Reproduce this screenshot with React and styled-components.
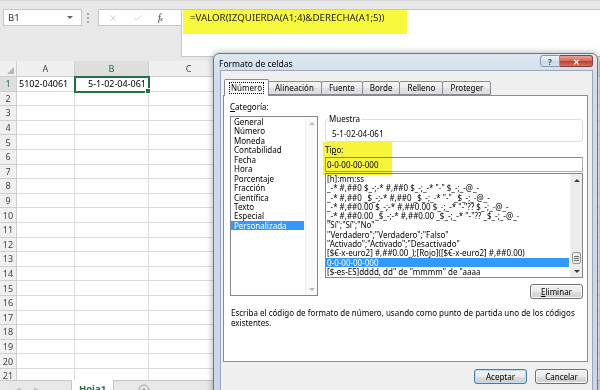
import React from 'react';
import styled, { createGlobalStyle } from 'styled-components';
import { X, Check, CirclePlus } from 'lucide-react';

const GREEN = '#217346';
const UI_FONT = '"Noto Sans", "Open Sans", sans-serif';

const GlobalStyle = createGlobalStyle`
  html, body { margin: 0; padding: 0; }
  body {
    width: 600px;
    height: 390px;
    overflow: hidden;
    background: #fff;
    font-family: ${UI_FONT};
  }
`;

const Screen = styled.div`
  position: relative;
  width: 600px;
  height: 390px;
  overflow: hidden;
  display: flex;
  flex-direction: column;
  background: #fff;
`;

/* ---------- formula bar ---------- */

const FormulaArea = styled.div`
  flex: none;
  height: 61px;
  box-sizing: border-box;
  background: #e8e8e8;
  border-top: 1px solid #d6d6d6;
  display: flex;
  align-items: flex-start;
  padding: 8px 0 0 3px;
`;

const NameBox = styled.div`
  width: 79px;
  height: 17px;
  box-sizing: border-box;
  background: #fff;
  border: 1px solid #c6c6c6;
  display: flex;
  align-items: center;
  justify-content: space-between;
  padding: 0 8px 0 4px;
  font-size: 9.5px;
  color: #333;
`;

const DropArrow = styled.span`
  width: 0;
  height: 0;
  border-left: 3px solid transparent;
  border-right: 3px solid transparent;
  border-top: 3px solid #666;
`;

const Grip = styled.div`
  width: 2px;
  height: 10px;
  margin: 4px 9px 0 5px;
  background: repeating-linear-gradient(#a9a9a9 0 2px, transparent 2px 4px);
`;

const FxButtons = styled.div`
  width: 83px;
  height: 17px;
  box-sizing: border-box;
  background: #fff;
  border: 1px solid #c6c6c6;
  border-right: none;
  display: flex;
  align-items: center;
  gap: 15px;
  padding-left: 9px;
  color: #b4b4b4;
`;

const Fx = styled.span`
  width: 10px;
  font-family: "Liberation Serif", serif;
  font-style: italic;
  font-size: 10px;
  color: #444;
  letter-spacing: -1px;

  small {
    font-size: 7px;
  }
`;

const FormulaBox = styled.div`
  flex: 1;
  height: 48px;
  box-sizing: border-box;
  background: #fff;
  border: 1px solid #c6c6c6;
  border-right: none;
  padding-left: 1px;
`;

const Marker = styled.div`
  width: 224px;
  height: 24px;
  box-sizing: border-box;
  background: #f8f83c;
  padding: 2px 0 0 7px;
  font-size: 9.7px;
  line-height: 12px;
  color: #222;
`;

/* ---------- sheet ---------- */

const Sheet = styled.div`
  flex: none;
  height: 319px;
  overflow: hidden;
  display: grid;
  grid-template-columns: 17px 58px 74px 80px 1fr;
  grid-template-rows: 16px;
  grid-auto-rows: 14.6px;
  font-size: 9px;
`;

const HeadCell = styled.div`
  box-sizing: border-box;
  background: ${({ $active }) => ($active ? '#dedede' : '#f0f0f0')};
  color: ${({ $active }) => ($active ? GREEN : '#444')};
  border-right: 1px solid #cfcfcf;
  border-bottom: 1px solid #cfcfcf;
  display: flex;
  align-items: center;
  justify-content: center;
  line-height: 1;
`;

const Corner = styled(HeadCell)`
  align-items: flex-end;
  justify-content: flex-end;
  padding: 0 2px 2px 0;
`;

const Cell = styled.div`
  position: relative;
  box-sizing: border-box;
  border-right: 1px solid #dadcdd;
  border-bottom: 1px solid #dadcdd;
  padding: 0 2px;
  display: flex;
  align-items: center;
  justify-content: ${({ $right }) => ($right ? 'flex-end' : 'flex-start')};
  white-space: nowrap;
  color: #000;
  outline: ${({ $selected }) => ($selected ? `2px solid ${GREEN}` : 'none')};
  outline-offset: -1px;
  z-index: ${({ $selected }) => ($selected ? 1 : 0)};

  &::after {
    content: '';
    display: ${({ $selected }) => ($selected ? 'block' : 'none')};
    position: absolute;
    right: -3px;
    bottom: -3px;
    width: 4px;
    height: 4px;
    background: ${GREEN};
    border: 1px solid #fff;
  }
`;

const TabBar = styled.div`
  flex: none;
  height: 16px;
  background: #e8e8e8;
  border-top: 1px solid #c8c8c8;
  display: flex;
  align-items: stretch;
`;

const NavArrows = styled.div`
  width: 72px;
  display: flex;
  align-items: center;
  gap: 14px;
  padding-left: 15px;
  box-sizing: border-box;
  border-right: 1px solid #c6c6c6;
  color: #bdbdbd;
  font-size: 7px;
`;

const SheetTab = styled.div`
  width: 41px;
  margin-top: -1px;
  background: #fff;
  border-right: 1px solid #c6c6c6;
  display: flex;
  justify-content: center;
  padding-top: 2px;
  font-size: 9.5px;
  font-weight: 700;
  color: ${GREEN};
`;

const AddSheet = styled.div`
  display: flex;
  align-items: flex-start;
  padding: 3px 0 0 24px;
  color: #7a7a7a;
`;

/* ---------- dialog ---------- */

const Dialog = styled.div`
  position: absolute;
  left: 213px;
  top: 53px;
  width: 385px;
  height: 345px;
  box-sizing: border-box;
  border: 1px solid #6b7889;
  border-radius: 6px 6px 0 0;
  background: linear-gradient(180deg, #dde7f2 0%, #cedbea 30px, #c9d7e8 100%);
  box-shadow: 0 0 7px rgba(0, 0, 0, 0.35);
  display: flex;
  flex-direction: column;
  padding: 0 4px 0 6px;
  font-family: ${UI_FONT};
  font-size: 8px;
  color: #000;
`;

const TitleBar = styled.div`
  height: 16px;
  display: flex;
  justify-content: space-between;
  align-items: flex-start;
`;

const Title = styled.div`
  padding: 5px 0 0 0;
  margin-left: -1px;
  font-size: 8.5px;
  line-height: 10px;
`;

const Controls = styled.div`
  display: flex;
  margin-top: 1px;
`;

const CtrlButton = styled.div`
  height: 12px;
  width: ${({ $close }) => ($close ? '33px' : '20px')};
  box-sizing: border-box;
  border: 1px solid ${({ $close }) => ($close ? '#8d3b34' : '#8596ab')};
  border-left-width: ${({ $close }) => ($close ? 0 : 1)}px;
  border-radius: ${({ $close }) => ($close ? '0 3px 3px 0' : '3px 0 0 3px')};
  background: ${({ $close }) =>
    $close
      ? 'linear-gradient(#e8a293, #d66e5f 45%, #c2402f 55%, #d0735e)'
      : 'linear-gradient(#eef3f9, #dbe5f0 45%, #cbd8e8 55%, #d9e4f1)'};
  color: ${({ $close }) => ($close ? '#fff' : '#3c4a5c')};
  display: flex;
  align-items: center;
  justify-content: center;
  font-size: 8px;
  font-weight: 700;
`;

const Client = styled.div`
  flex: 1;
  background: #f0f0f0;
  border: 1px solid #9aa6b5;
  padding: 8px 4px 0 2px;
  display: flex;
  flex-direction: column;
`;

const Tabs = styled.div`
  display: flex;
  align-items: flex-end;
  height: 16px;
  padding-left: 2px;
`;

const Tab = styled.div`
  position: relative;
  box-sizing: border-box;
  height: ${({ $active }) => ($active ? '17px' : '14px')};
  margin: ${({ $active }) => ($active ? '0 -2px -1px -1px' : '0 -1px 0 0')};
  padding: 0 ${({ $active }) => ($active ? '4px' : '5px')};
  border: 1px solid #898c95;
  border-bottom: ${({ $active }) => ($active ? 'none' : '1px solid #898c95')};
  border-radius: 2px 2px 0 0;
  background: ${({ $active }) =>
    $active ? '#fff' : 'linear-gradient(#f4f4f4, #ececec 50%, #e2e2e2 51%, #dcdcdc)'};
  z-index: ${({ $active }) => ($active ? 2 : 1)};
  display: flex;
  align-items: center;
  line-height: 10px;

  span {
    padding: 0 1px;
    border: 1px dotted ${({ $active }) => ($active ? '#000' : 'transparent')};
  }
`;

const Panel = styled.div`
  position: relative;
  height: 267px;
  box-sizing: border-box;
  background: #fff;
  border: 1px solid #898c95;
  padding: 6px 4px 0 6px;
  display: flex;
  flex-direction: column;
`;

const TopRow = styled.div`
  display: flex;
  gap: 7px;
`;

const LeftCol = styled.div`
  width: 88px;
  display: flex;
  flex-direction: column;
`;

const RightCol = styled.div`
  flex: 1;
  display: flex;
  flex-direction: column;
`;

const Label = styled.div`
  line-height: 10px;
  margin-top: ${({ $top = 0 }) => $top}px;
  margin-bottom: ${({ $gap }) => $gap}px;

  u {
    text-decoration-thickness: 1px;
    text-underline-offset: 1px;
  }
`;

const ListBox = styled.div`
  height: ${({ $h }) => $h}px;
  box-sizing: border-box;
  border: 1px solid #828790;
  background: #fff;
  display: flex;
  overflow: hidden;
`;

const Items = styled.div`
  flex: 1;
  display: flex;
  flex-direction: column;
  padding: 0 1px 0 0;
  min-width: 0;
  overflow: hidden;
`;

const Item = styled.div`
  flex: none;
  height: ${({ $h }) => $h}px;
  line-height: ${({ $h }) => $h}px;
  padding-left: ${({ $pad }) => $pad}px;
  white-space: nowrap;
  background: ${({ $selected }) => ($selected ? '#3399ff' : 'transparent')};
  color: ${({ $selected }) => ($selected ? '#fff' : '#000')};
`;

const ScrollBar = styled.div`
  width: 12px;
  flex: none;
  display: flex;
  flex-direction: column;
  justify-content: space-between;
  background: ${({ $track }) => $track};
  border-left: 1px solid #efefef;
  box-sizing: border-box;
`;

const ScrollArrow = styled.div`
  height: 12px;
  display: flex;
  align-items: center;
  justify-content: center;

  &::before {
    content: '';
    width: 0;
    height: 0;
    border-left: 3px solid transparent;
    border-right: 3px solid transparent;
    ${({ $down, $color }) =>
      $down ? `border-top: 3px solid ${$color};` : `border-bottom: 3px solid ${$color};`}
  }
`;

const ScrollTrack = styled.div`
  flex: 1;
  display: flex;
  flex-direction: column;
  justify-content: flex-end;
  padding: 0 1px 1px;
`;

const Thumb = styled.div`
  height: 12px;
  box-sizing: border-box;
  border: 1px solid #979797;
  border-radius: 2px;
  background: linear-gradient(90deg, #f3f3f3, #e4e4e4);
  display: flex;
  flex-direction: column;
  justify-content: center;
  align-items: center;
  gap: 1px;

  i {
    display: block;
    width: 5px;
    height: 1px;
    background: #6f6f6f;
  }
`;

const GroupBox = styled.fieldset`
  margin: 12px 0 0;
  padding: 0 0 2px 6px;
  border: 1px solid #d5dfe5;
  border-radius: 3px;
  min-width: 0;

  legend {
    padding: 0 1px;
    margin-left: -4px;
    line-height: 10px;
  }
`;

const Sample = styled.div`
  line-height: 10px;
  padding-top: 5px;
`;

const TextInput = styled.div`
  height: 15px;
  box-sizing: border-box;
  border: 1px solid #abadb3;
  border-top-color: #8e8f8f;
  padding-left: 1px;
  display: flex;
  align-items: center;
  margin-bottom: 1px;
`;

const Button = styled.button`
  width: 53px;
  height: 15px;
  box-sizing: border-box;
  padding: 0;
  font-family: ${UI_FONT};
  font-size: 8px;
  color: #000;
  border: 1px solid ${({ $default }) => ($default ? '#3c7fb1' : '#707070')};
  border-radius: 3px;
  background: linear-gradient(#f2f2f2 0%, #ebebeb 50%, #dddddd 51%, #cfcfcf 100%);
  box-shadow: inset 0 0 0 1px ${({ $default }) => ($default ? '#bfe0f5' : '#fbfbfb')};
`;

const DeleteButton = styled(Button)`
  align-self: flex-end;
  margin-top: 6px;
`;

const Description = styled.p`
  margin: 9px 0 0 1px;
  line-height: 10px;
`;

const Highlight = styled.div`
  position: absolute;
  left: 99px;
  top: 46px;
  width: 69px;
  height: 33px;
  background: #f6f53c;
  mix-blend-mode: multiply;
  pointer-events: none;
`;

const ButtonRow = styled.div`
  display: flex;
  justify-content: flex-end;
  gap: 8px;
  margin-top: 7px;
`;

const COLS = ['A', 'B', 'C', 'D'];
const ROWS = Array.from({ length: 21 }, (_, i) => i + 1);

const TABS = ['Número', 'Alineación', 'Fuente', 'Borde', 'Relleno', 'Proteger'];

const CATEGORIES = [
  'General', 'Número', 'Moneda', 'Contabilidad', 'Fecha', 'Hora', 'Porcentaje',
  'Fracción', 'Científica', 'Texto', 'Especial', 'Personalizada',
];

const FORMATS = [
  '[h]:mm:ss',
  '_-* #,##0 $_-;-* #,##0 $_-;_-* "-" $_-;_-@_-',
  '_-* #,##0 _$_-;-* #,##0 _$_-;_-* "-" _$_-;_-@_-',
  '_-* #,##0.00 $_-;-* #,##0.00 $_-;_-* "-"?? $_-;_-@_-',
  '_-* #,##0.00 _$_-;-* #,##0.00 _$_-;_-* "-"?? _$_-;_-@_-',
  '"Sí";"Sí";"No"',
  '"Verdadero";"Verdadero";"Falso"',
  '"Activado";"Activado";"Desactivado"',
  '[$€-x-euro2] #,##0.00_);[Rojo]([$€-x-euro2] #,##0.00)',
  '0-0-00-00-000',
  '[$-es-ES]dddd, dd" de "mmmm" de "aaaa',
];

const CornerMark = () => (
  <svg width="7" height="7" viewBox="0 0 7 7">
    <polygon points="7,0 7,7 0,7" fill="#b5b5b5" />
  </svg>
);

const FormulaBar = () => (
  <FormulaArea>
    <NameBox>
      B1
      <DropArrow />
    </NameBox>
    <Grip />
    <FxButtons>
      <X size={10} strokeWidth={1.5} />
      <Check size={10} strokeWidth={1.5} />
      <Fx>f<small>x</small></Fx>
    </FxButtons>
    <FormulaBox>
      <Marker>=VALOR(IZQUIERDA(A1;4)&amp;DERECHA(A1;5))</Marker>
    </FormulaBox>
  </FormulaArea>
);

const Worksheet = () => (
  <Sheet>
    <Corner>
      <CornerMark />
    </Corner>
    {COLS.map((c) => (
      <HeadCell key={c} $active={c === 'B'}>{c}</HeadCell>
    ))}
    {ROWS.map((r) => (
      <React.Fragment key={r}>
        <HeadCell $active={r === 1}>{r}</HeadCell>
        <Cell>{r === 1 ? '5102-04061' : ''}</Cell>
        <Cell $right $selected={r === 1}>{r === 1 ? '5-1-02-04-061' : ''}</Cell>
        <Cell />
        <Cell />
      </React.Fragment>
    ))}
  </Sheet>
);

const FormatDialog = () => (
  <Dialog>
    <TitleBar>
      <Title>Formato de celdas</Title>
      <Controls>
        <CtrlButton>?</CtrlButton>
        <CtrlButton $close>✕</CtrlButton>
      </Controls>
    </TitleBar>
    <Client>
      <Tabs>
        {TABS.map((t, i) => (
          <Tab key={t} $active={i === 0}>
            <span>{t}</span>
          </Tab>
        ))}
      </Tabs>
      <Panel>
        <TopRow>
          <LeftCol>
            <Label $gap={4}>
              <u>C</u>ategoría:
            </Label>
            <ListBox $h={180}>
              <Items>
                {CATEGORIES.map((c) => (
                  <Item key={c} $h={9.45} $pad={3} $selected={c === 'Personalizada'}>
                    {c}
                  </Item>
                ))}
              </Items>
              <ScrollBar $track="#fafafa">
                <ScrollArrow $color="#b8b8b8" />
                <ScrollArrow $down $color="#b8b8b8" />
              </ScrollBar>
            </ListBox>
          </LeftCol>
          <RightCol>
            <GroupBox>
              <legend>Muestra</legend>
              <Sample>5-1-02-04-061</Sample>
            </GroupBox>
            <Label $gap={2} $top={3}>
              Ti<u>p</u>o:
            </Label>
            <TextInput>0-0-00-00-000</TextInput>
            <ListBox $h={105}>
              <Items>
                {FORMATS.map((f) => (
                  <Item key={f} $h={9.3} $pad={1} $selected={f === '0-0-00-00-000'}>
                    {f}
                  </Item>
                ))}
              </Items>
              <ScrollBar $track="#ececec">
                <ScrollArrow $color="#404040" />
                <ScrollTrack>
                  <Thumb>
                    <i />
                    <i />
                    <i />
                  </Thumb>
                </ScrollTrack>
                <ScrollArrow $down $color="#404040" />
              </ScrollBar>
            </ListBox>
            <DeleteButton>
              <u>E</u>liminar
            </DeleteButton>
          </RightCol>
        </TopRow>
        <Description>
          Escriba el código de formato de número, usando como punto de partida uno de los códigos
          existentes.
        </Description>
        <Highlight />
      </Panel>
      <ButtonRow>
        <Button $default>Aceptar</Button>
        <Button>Cancelar</Button>
      </ButtonRow>
    </Client>
  </Dialog>
);

const App = () => (
  <Screen>
    <GlobalStyle />
    <FormulaBar />
    <Worksheet />
    <TabBar>
      <NavArrows>
        <span>◀</span>
        <span>▶</span>
      </NavArrows>
      <SheetTab>Hoja1</SheetTab>
      <AddSheet>
        <CirclePlus size={12} strokeWidth={1.3} />
      </AddSheet>
    </TabBar>
    <FormatDialog />
  </Screen>
);

export default App;
